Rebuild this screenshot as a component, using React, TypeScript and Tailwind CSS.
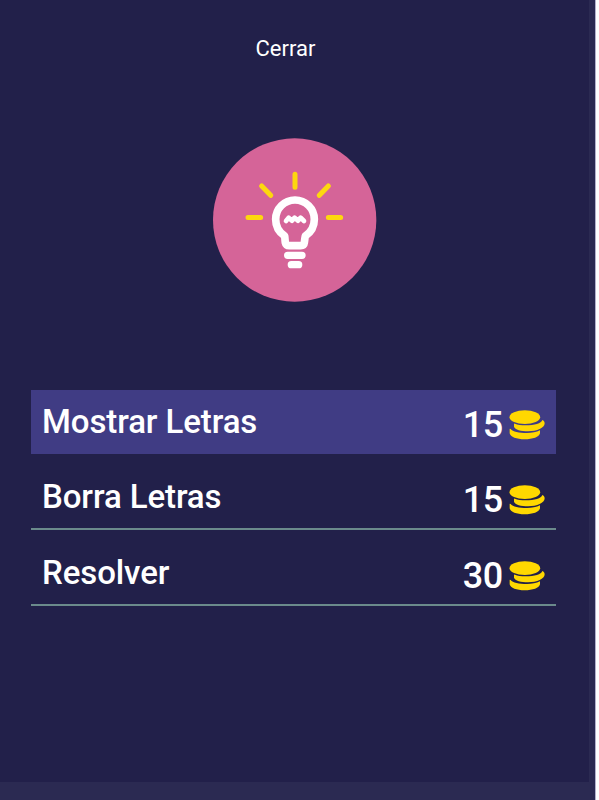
import { clsx } from 'clsx'

interface Hint {
  label: string
  cost: number
  rowClass: string
}

const HINTS: Hint[] = [
  { label: 'Mostrar Letras', cost: 15, rowClass: 'h-[63.500px] bg-[#403c84]' },
  { label: 'Borra Letras', cost: 15, rowClass: 'mt-[11.500px] h-[65px] border-b-2 border-[#6b8a8c]' },
  { label: 'Resolver', cost: 30, rowClass: 'mt-[11px] h-[65px] border-b-2 border-[#6b8a8c]' },
]

function BulbIcon() {
  return (
    <svg viewBox="0 0 540 540" className="h-[180px] w-[180px]" fill="none" strokeLinecap="round" strokeLinejoin="round">
      <circle cx="269" cy="270" r="245" fill="#d56498" />
      <path
        d="M270 133V172M170 168L197 196M370 168L343 196M129 262.500H167M370 262.500H407"
        stroke="#fdd70f"
        strokeWidth="15"
      />
      <path
        d="M239 318C222 307 212 288 212 268A58 58 0 0 1 328 268C328 288 318 307 301 318C299 327 299 332 298 338Q297 347 287 347H253Q243 347 241 338C240 332 240 325 239 318Z"
        stroke="#fff"
        strokeWidth="23"
      />
      <path d="M243 273L251 263L261 272L269 263L279 272L287 263L297 273" stroke="#fff" strokeWidth="14" />
      <path d="M248 376H291M259 404H281" stroke="#fff" strokeWidth="22" />
    </svg>
  )
}

function CoinsIcon() {
  return (
    <svg viewBox="0 0 108 90" className="h-[30px] w-[36px]" fill="#ffd800">
      <path d="M2 57V70C4 81 23 88 47 88C71 88 91 81 93 70V61C82 67 69 69 54 69C30 69 11 65 5 57Q2 55 2 57Z" />
      <path d="M15 42V50C18 59 36 64 57 64C84 64 107 54 107 40C107 35 104 31 100 30C97 40 77 46 50 46C37 46 25 45 18 41Q15 39 15 42Z" />
      <ellipse cx="47.500" cy="21.500" rx="46" ry="20.500" />
    </svg>
  )
}

function HintRow({ label, cost, rowClass }: Hint) {
  return (
    <li className={clsx('flex items-start justify-between pl-[11.500px] pr-[10.200px]', rowClass)}>
      <span className="pt-[15px] text-[33px] leading-none tracking-[-0.100px]">{label}</span>
      <span className="flex items-start gap-[6.500px]">
        <span className="pt-[17px] text-[36px] leading-none tracking-[-0.400px]">{cost}</span>
        <span className="pt-[20px]">
          <CoinsIcon />
        </span>
      </span>
    </li>
  )
}

export default function App() {
  return (
    <div className="h-[800px] w-[599px] bg-white pr-[3px]">
      <div className="h-full border-r border-[#b3b1cd] bg-[#2b2a52] pr-[6px] pb-[18px]">
        <main className="flex h-full flex-col bg-[#22204a] font-['Roboto',sans-serif] font-medium text-white">
          <button className="mt-[38px] ml-[255.500px] self-start text-[22px] font-normal leading-[22px]">
            Cerrar
          </button>
          <div className="mt-[70px] ml-[205px]">
            <BulbIcon />
          </div>
          <ul className="mt-[80px] ml-[30.500px] w-[525px]">
            {HINTS.map((hint) => (
              <HintRow key={hint.label} {...hint} />
            ))}
          </ul>
        </main>
      </div>
    </div>
  )
}
